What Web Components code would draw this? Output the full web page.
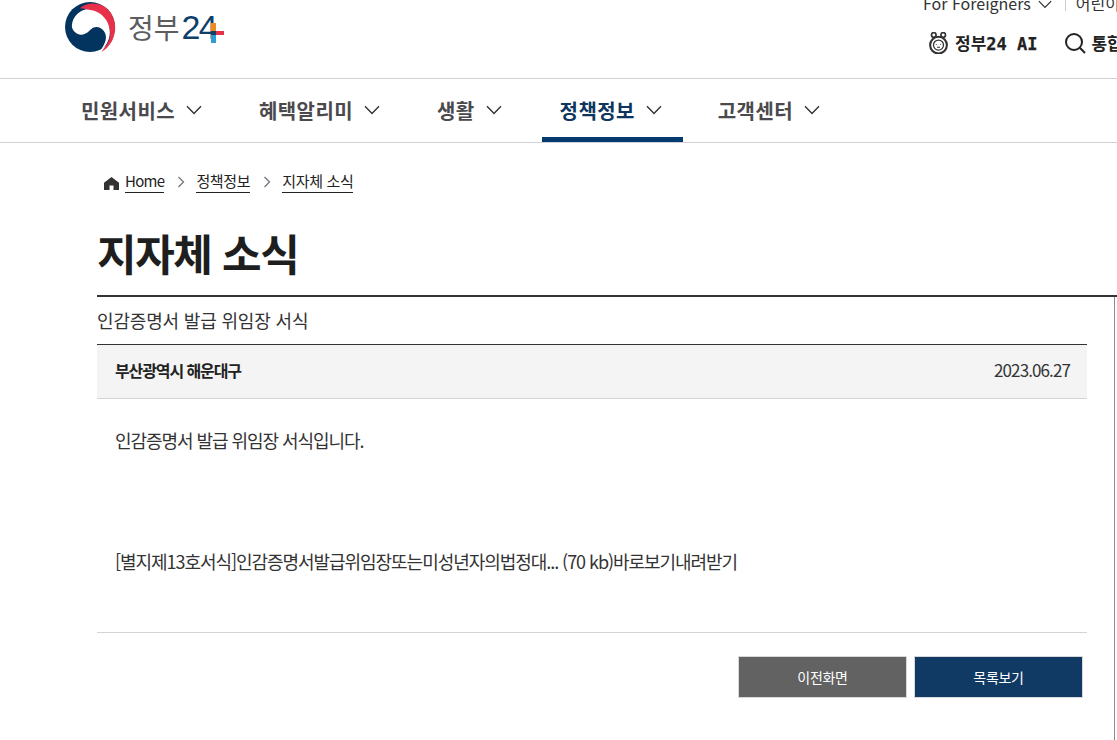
<!DOCTYPE html>
<html lang="ko">
<head>
<meta charset="utf-8">
<title>지자체 소식</title>
<style>
  html, body { margin: 0; height: 740px; overflow: hidden; background: #fff; }
  body { font-family: "Noto Sans CJK KR", "Noto Sans", sans-serif; color: #1e1e1e; }
</style>
</head>
<body>
<gov-header></gov-header>
<gov-nav>
  <nav-item style="margin-left:81px">민원서비스</nav-item>
  <nav-item style="margin-left:57px">혜택알리미</nav-item>
  <nav-item style="margin-left:57px">생활</nav-item>
  <nav-item active style="margin-left:58px">정책정보</nav-item>
  <nav-item style="margin-left:56px">고객센터</nav-item>
</gov-nav>
<page-crumbs></page-crumbs>
<page-title>지자체 소식</page-title>
<news-article
  subject="인감증명서 발급 위임장 서식"
  org="부산광역시 해운대구"
  date="2023.06.27">
  <p>인감증명서 발급 위임장 서식입니다.</p>
  <p class="file">[별지제13호서식]인감증명서발급위임장또는미성년자의법정대... (70 kb)바로보기내려받기</p>
</news-article>

<script>
const chevron = `<svg width="16" height="10" viewBox="0 0 16 10" fill="none" stroke="#333" stroke-width="1.4"><path d="M1 1.2 8 8.4 15 1.2"/></svg>`;

class GovHeader extends HTMLElement {
  constructor() {
    super();
    this.attachShadow({ mode: 'open' });
    this.shadowRoot.innerHTML = `
      <style>
        :host { display: flex; height: 78px; border-bottom: 1px solid #d2d2d6; overflow: hidden; justify-content: space-between; }
        .logo { display: flex; align-items: flex-start; margin-left: 64px; padding-top: 2px; }
        .word { display: flex; align-items: center; height: 50px; margin-left: 12px; position: relative; }
        .ko { font-size: 28px; color: #5d5d5f; }
        .num { font-family: "Liberation Sans", sans-serif; font-size: 34px; color: #0e3f6b; letter-spacing: -1.6px; margin-left: 2px; }
        .plus { position: absolute; left: 83px; top: 21px; }
        .right { width: 194px; flex: none; }
        .util { display: flex; align-items: center; height: 10px; font-size: 16px; color: #333; white-space: nowrap; margin-top: -2px; }
        .util svg { margin: 0 0 0 7px; position: relative; top: 1px; flex: none; }
        .sep { width: 1px; height: 16px; background: #ccc; margin: 0 10px 0 13px; flex: none; }
        .tools { display: flex; align-items: center; margin-top: 22px; margin-left: 5px; font-weight: 700; font-size: 17px; color: #222; white-space: nowrap; }
        .tools svg { flex: none; }
        .ai { margin-left: 6px; }
        .mono { font-family: "DejaVu Sans Mono", monospace; font-size: 17px; -webkit-text-stroke: .25px #222; }
        .search { margin-left: 27px; margin-right: 5px; }
      </style>
      <div class="logo">
        <svg width="52" height="50" viewBox="12 5 153 150">
          <circle cx="88.5" cy="80" r="75" fill="#02345f"/>
          <path d="M34 76C36 45 65 22 95 27C125 32 150 60 148 98C147 120 135 142 118 153C135 130 143 110 130 92C118 76 100 76 88 90C75 105 55 108 44 96C38 90 34 84 34 76Z" fill="#fff"/>
          <path d="M58 24C75 8 105 5 130 18C155 33 168 65 163 95C159 122 143 145 122 155C140 135 150 118 149 95C147 60 120 32 90 29C78 27 67 24 58 24Z" fill="#e8304b"/>
        </svg>
        <div class="word">
          <span class="ko">정부</span><span class="num">24</span>
          <svg class="plus" width="13" height="20" viewBox="0 0 13 20">
            <rect x="0" y="0" width="5" height="8" fill="#f08a24"/>
            <rect x="0" y="12" width="5" height="8" fill="#2a9fd6"/>
            <rect x="0" y="8" width="5" height="4" fill="#0e3f6b"/>
            <rect x="5" y="8" width="8" height="4" fill="#e8304b"/>
          </svg>
        </div>
      </div>
      <div class="right">
        <div class="util"><span>For Foreigners</span>${chevron.replace('width="16"', 'width="14"').replace('height="10"', 'height="9"')}<span class="sep"></span><span>어린이</span></div>
        <div class="tools">
          <svg width="21" height="22" viewBox="0 0 20 21" fill="none" stroke="#333" stroke-width="2">
            <circle cx="10" cy="12.5" r="8"/><circle cx="10" cy="12.5" r="4.8" stroke-width="1.2"/>
            <circle cx="5.5" cy="2.8" r="2.2" stroke-width="1.6"/><circle cx="14.5" cy="2.8" r="2.2" stroke-width="1.6"/>
            <path d="M8 11.7v.8M12 11.7v.8M8.6 14.5h2.8" stroke-width="1"/>
          </svg>
          <span class="ai">정부<span class="mono">24 AI</span></span>
          <svg class="search" width="22" height="22" viewBox="0 0 22 22" fill="none" stroke="#222" stroke-width="2"><circle cx="10" cy="10" r="8"/><path d="m15.8 15.8 5.2 5.2"/></svg>
          <span>통합검색</span>
        </div>
      </div>`;
  }
}

class GovNav extends HTMLElement {
  constructor() {
    super();
    this.attachShadow({ mode: 'open' });
    this.shadowRoot.innerHTML = `
      <style>
        :host { display: flex; height: 63px; border-bottom: 1px solid #d2d2d6; }
      </style>
      <slot></slot>`;
  }
}

class NavItem extends HTMLElement {
  constructor() {
    super();
    this.attachShadow({ mode: 'open' });
    this.shadowRoot.innerHTML = `
      <style>
        :host { display: flex; align-items: center; position: relative; height: 63px; padding-bottom: 1px; box-sizing: border-box; font-size: 20px; font-weight: 700; letter-spacing: .4px; color: #4a4a4e; white-space: nowrap; }
        :host([active]) { color: #0e3560; }
        :host([active])::after { content: ""; position: absolute; left: -18px; right: -21px; bottom: 0; height: 5px; background: #033a6f; }
        svg { margin-left: 11px; }
      </style>
      <slot></slot>${chevron}`;
  }
}

class PageCrumbs extends HTMLElement {
  constructor() {
    super();
    this.attachShadow({ mode: 'open' });
    const gt = `<svg class="gt" width="8" height="12" viewBox="0 0 8 12" fill="none" stroke="#77737f" stroke-width="1.3"><path d="m1.5 1 5 5-5 5"/></svg>`;
    this.shadowRoot.innerHTML = `
      <style>
        :host { display: flex; align-items: center; height: 24px; margin: 27px 0 0 104px; font-size: 15px; letter-spacing: -0.35px; color: #222; }
        a { color: inherit; border-bottom: 1px solid #222; line-height: 20px; height: 21px; }
        a.en { letter-spacing: -0.7px; }
        .home { margin: 3px 6px 0 0; }
        .gt { margin: 0 11px 0 13px; }
      </style>
      <svg class="home" width="15" height="13" viewBox="0 0 15 13"><path d="M7.5 0 15 5.8V13H9.5V8.5H5.5V13H0V5.8z" fill="#333"/></svg>
      <a class="en">Home</a>${gt}<a>정책정보</a>${gt}<a>지자체 소식</a>`;
  }
}

class PageTitle extends HTMLElement {
  constructor() {
    super();
    this.attachShadow({ mode: 'open' });
    this.shadowRoot.innerHTML = `
      <style>
        :host { display: block; margin: 29px 0 0 97px; height: 74px; box-sizing: border-box; border-bottom: 2px solid #333; font-size: 43px; font-weight: 700; line-height: 58px; letter-spacing: -1.4px; color: #1e1e1e; }
      </style>
      <slot></slot>`;
  }
}

class NewsArticle extends HTMLElement {
  constructor() {
    super();
    this.attachShadow({ mode: 'open' });
    this.shadowRoot.innerHTML = `
      <style>
        :host { display: block; margin-left: 97px; padding-right: 30px; position: relative; }
        .rule { position: absolute; right: 2px; top: 0; height: 460px; width: 1px; background: #8c8c8c; }
        h2 { margin: 0; height: 47px; font-size: 18px; font-weight: 400; line-height: 46px; letter-spacing: -0.17px; color: #333; }
        .head { display: flex; justify-content: space-between; align-items: center; height: 49px; padding: 0 17px 4px 18px; background: #f4f4f4; border-top: 1px solid #333; border-bottom: 1px solid #d4d4d4; }
        .org { font-size: 16px; letter-spacing: -1.1px; font-weight: 700; color: #222; }
        .date { font-size: 17px; letter-spacing: -0.9px; color: #333; }
        .body { height: 233px; padding: 0 18px; border-bottom: 1px solid #d4d4d4; font-size: 18px; line-height: 24px; letter-spacing: -1.05px; color: #333; }
        ::slotted(p) { margin: 0; white-space: pre-wrap; }
        ::slotted(p:first-child) { padding-top: 29px; }
        ::slotted(p.file) { margin-top: 97px; }
        .btns { display: flex; justify-content: flex-end; gap: 7px; margin-top: 23px; padding-right: 4px; }
        .btn { width: 169px; height: 42px; box-sizing: border-box; border: 1px solid #d8d8d8; display: flex; align-items: center; justify-content: center; color: #fff; font-size: 14px; letter-spacing: -0.3px; background: #626262; }
        .btn.main { background: #103a63; }
      </style>
      <div class="rule"></div>
      <h2>${this.getAttribute('subject')}</h2>
      <div class="head"><span class="org">${this.getAttribute('org')}</span><span class="date">${this.getAttribute('date')}</span></div>
      <div class="body"><slot></slot></div>
      <div class="btns"><div class="btn">이전화면</div><div class="btn main">목록보기</div></div>`;
  }
}

customElements.define('gov-header', GovHeader);
customElements.define('gov-nav', GovNav);
customElements.define('nav-item', NavItem);
customElements.define('page-crumbs', PageCrumbs);
customElements.define('page-title', PageTitle);
customElements.define('news-article', NewsArticle);
</script>
</body>
</html>
